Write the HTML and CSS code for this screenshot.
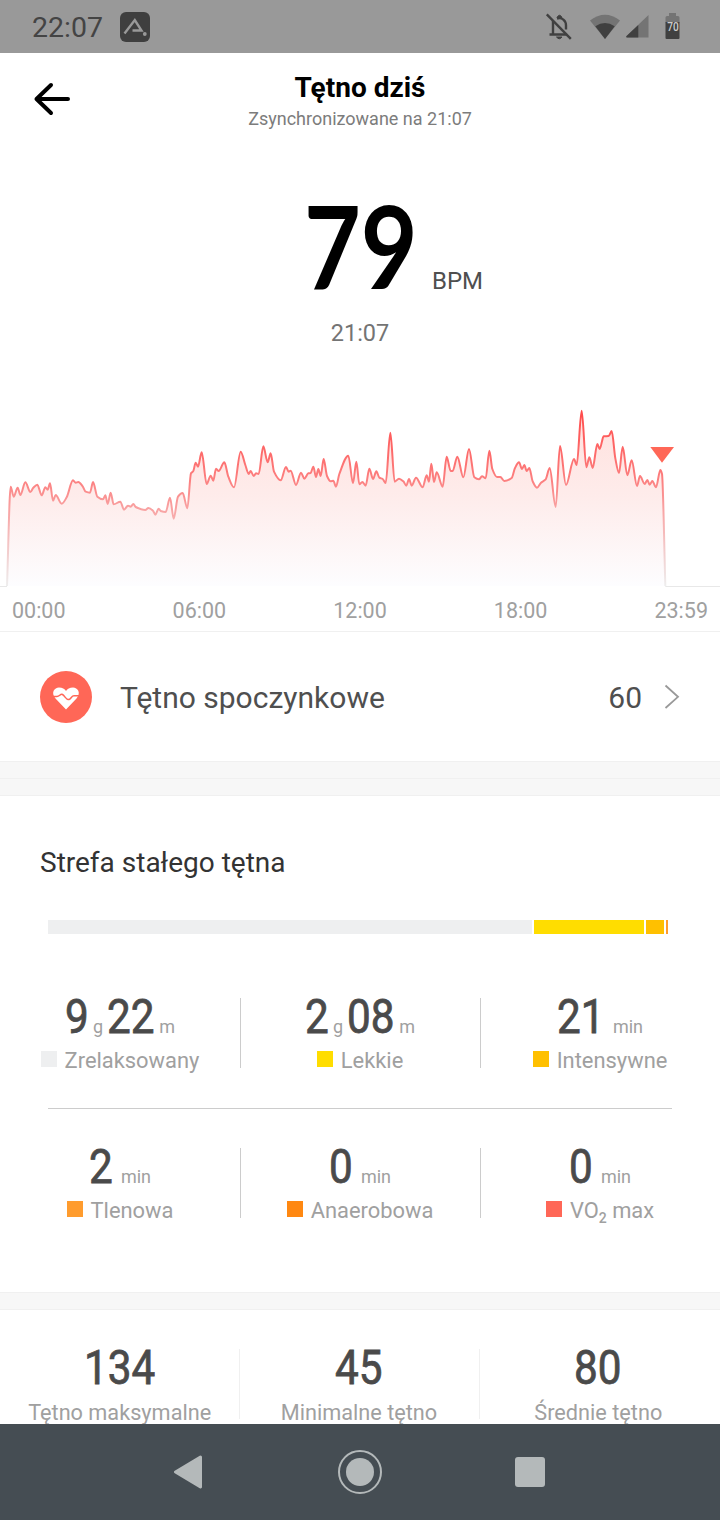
FILE: index.html
```html
<!DOCTYPE html>
<html lang="pl">
<head>
  <meta charset="UTF-8" />
  <meta name="viewport" content="width=device-width, initial-scale=1" />
  <title>Tętno dziś</title>
  <link rel="stylesheet" href="styles.css">
</head>
<body>
  <div class="status-bar">
    <span class="clock">22:07</span>
    <svg class="app-badge" width="30" height="30" viewBox="0 0 30 30">
      <rect width="30" height="30" rx="6" fill="#3f3f3f"/>
      <path d="M4.500 21.500L14.800 8L21.500 18.500H12.500" fill="none" stroke="#999" stroke-width="2.400"/>
      <circle cx="24.800" cy="22" r="1.900" fill="#999"/>
    </svg>
    <div class="status-icons">
      <svg width="28" height="30" viewBox="0 0 28 30" fill="none" stroke="#404040" stroke-width="2.4">
        <path d="M8 9V21.5M4.5 22.5H22M12 6.5C17 5 21 8.500 21 13.500V17.500"/>
        <path d="M12 5.500Q14.500 1 17 5.500Z" fill="#404040" stroke-width="1"/>
        <path d="M11.500 25H17Q14.500 28.500 11.500 25Z" fill="#404040" stroke-width="1"/>
        <path d="M1.800 2.300L25.800 26.800"/>
      </svg>
      <svg width="30" height="26" viewBox="0 0 30 26">
        <path d="M0 6.500Q15 -5 30 6.500L15 25Z" fill="#747474"/>
        <path d="M5.300 12.300Q15 5.500 24.700 12.300L15 25Z" fill="#404040"/>
      </svg>
      <svg width="23" height="23" viewBox="0 0 23 23">
        <path d="M22.500 0V22.500H1Q-.5 22 .8 20.800Z" fill="#747474"/>
        <path d="M12.300 10V22.500H1Q-.5 22 .8 20.800Z" fill="#404040"/>
      </svg>
      <svg class="battery" width="15" height="27" viewBox="0 0 15 27">
        <path d="M4 0H11V3H13Q14.500 3 14.500 4.500V10H.5V4.500Q.5 3 2 3H4Z" fill="#747474"/>
        <path d="M.5 9H14.500V25Q14.500 26 13.500 26H1.500Q.5 26 .5 25Z" fill="#404040"/>
        <text x="8" y="18" class="battery-text" textLength="11.500" lengthAdjust="spacingAndGlyphs">70</text>
      </svg>
    </div>
  </div>

  <header class="header">
    <svg class="back" width="38" height="36" viewBox="0 0 38 36" aria-label="Wstecz">
      <path d="M18 4L3.500 18L18 32M3.500 18H35" fill="none" stroke="#000" stroke-width="4" stroke-linecap="round" stroke-linejoin="round"/>
    </svg>
    <h1>Tętno dziś</h1>
    <p>Zsynchronizowane na 21:07</p>
  </header>

  <section class="current">
    <div class="bpm">
      <span class="bpm-value">79</span>
      <span class="bpm-unit">BPM</span>
    </div>
    <time>21:07</time>
  </section>

  <section class="chart">
    <svg class="plot" viewBox="0 0 2160 564">
      <defs>
        <linearGradient id="lineColor" gradientUnits="userSpaceOnUse" x1="0" y1="30" x2="0" y2="558">
          <stop offset="0" stop-color="#ff4949"/>
          <stop offset="0.4" stop-color="#fc8080"/>
          <stop offset="0.58" stop-color="#f8a6a6"/>
          <stop offset="1" stop-color="#eeeeee"/>
        </linearGradient>
        <linearGradient id="areaColor" gradientUnits="userSpaceOnUse" x1="0" y1="30" x2="0" y2="558">
          <stop offset="0" stop-color="#ffe0dd"/>
          <stop offset="0.5" stop-color="#feeceb"/>
          <stop offset="1" stop-color="#fdfdff"/>
        </linearGradient>
      </defs>
      <path id="area" fill="url(#areaColor)"/>
      <path d="M0 559.500H21M1996 559.500H2160" stroke="#e8e8e8" stroke-width="3"/>
      <path id="line" fill="none" stroke="url(#lineColor)" stroke-width="6" stroke-linejoin="round"/>
      <path d="M1951 141H2022L1986 188Z" fill="#ff6757"/>
    </svg>
    <div class="hours">
      <span>00:00</span><span>06:00</span><span>12:00</span><span>18:00</span><span>23:59</span>
    </div>
  </section>

  <section class="resting">
    <svg width="52" height="52" viewBox="0 0 52 52">
      <circle cx="26" cy="26" r="26" fill="#ff6757"/>
      <path d="M26 38.500L15.500 27.500C10.500 21.500 14.500 16.500 19 16.500C22.500 16.500 24.500 18 26 20C27.500 18 29.500 16.500 33 16.500C37.500 16.500 41.500 21.500 36.500 27.500Z" fill="#fff"/>
      <path d="M12 25.500H17C19.500 25.500 20.500 22.500 22.500 23.500C25 25 26.500 29.500 29 28.500C31.500 27.500 31.500 24.800 34 24.800H40" fill="none" stroke="#ff6757" stroke-width="1.500"/>
    </svg>
    <span class="resting-label">Tętno spoczynkowe</span>
    <span class="resting-value">60</span>
    <svg width="16" height="26" viewBox="0 0 16 26">
      <path d="M1.500 1.500L14 12.800L1.500 24" fill="none" stroke="#999" stroke-width="1.800"/>
    </svg>
  </section>

  <div class="gap double"></div>

  <section class="zones">
    <h2>Strefa stałego tętna</h2>
    <div class="zone-bar">
      <i class="relaxed"></i><i class="light"></i><i class="intensive"></i><i class="aerobic"></i>
    </div>
    <div class="grid">
      <div class="cell">
        <div class="value"><b class="d1">9</b><small class="h">g</small><b class="d2">22</b><small>m</small></div>
        <div class="label"><i class="relaxed"></i>Zrelaksowany</div>
      </div>
      <div class="cell">
        <div class="value"><b class="d1">2</b><small class="h">g</small><b class="d2">08</b><small>m</small></div>
        <div class="label"><i class="light"></i>Lekkie</div>
      </div>
      <div class="cell">
        <div class="value"><b class="d2">21</b><small class="min">min</small></div>
        <div class="label"><i class="intensive"></i>Intensywne</div>
      </div>
    </div>
    <hr>
    <div class="grid">
      <div class="cell">
        <div class="value"><b class="d1">2</b><small class="min">min</small></div>
        <div class="label"><i class="aerobic"></i>Tlenowa</div>
      </div>
      <div class="cell">
        <div class="value"><b class="d1">0</b><small class="min">min</small></div>
        <div class="label"><i class="anaerobic"></i>Anaerobowa</div>
      </div>
      <div class="cell">
        <div class="value"><b class="d1">0</b><small class="min">min</small></div>
        <div class="label"><i class="vo2"></i><span>VO<sub>2</sub> max</span></div>
      </div>
    </div>
  </section>

  <div class="gap"></div>

  <section class="grid summary">
    <div class="cell">
      <div class="value"><b class="d3">134</b></div>
      <div class="label">Tętno maksymalne</div>
    </div>
    <div class="cell">
      <div class="value"><b class="d2">45</b></div>
      <div class="label">Minimalne tętno</div>
    </div>
    <div class="cell">
      <div class="value"><b class="d2">80</b></div>
      <div class="label">Średnie tętno</div>
    </div>
  </section>

  <nav class="nav-bar">
    <svg width="30" height="34" viewBox="0 0 30 34"><path d="M27.500 2L2.500 17L27.500 32Z" fill="#b4b9ba" stroke="#b4b9ba" stroke-width="3" stroke-linejoin="round"/></svg>
    <svg width="44" height="44" viewBox="0 0 44 44"><circle cx="22" cy="22" r="21" fill="none" stroke="#b4b9ba" stroke-width="2"/><circle cx="22" cy="22" r="14" fill="#b4b9ba"/></svg>
    <svg width="30" height="30" viewBox="0 0 30 30"><rect width="30" height="30" rx="3" fill="#b4b9ba"/></svg>
  </nav>

  <script>
    // x,y samples in chart units
    const samples = [
      [21,558],[32,260],[41,290],[53,263],[61,285],[76,247],[91,276],[100,263],[112,254],[125,286],
      [136,262],[143,269],[150,250],[159,302],[167,285],[185,311],[200,292],[219,241],[227,248],[235,246],
      [248,259],[257,275],[270,278],[279,246],[292,290],[309,298],[316,286],[323,312],[332,278],[341,313],
      [361,305],[372,329],[384,317],[392,320],[400,312],[407,321],[436,330],[445,324],[459,332],[466,344],
      [476,326],[482,333],[497,336],[510,293],[521,356],[534,290],[548,279],[562,325],[573,220],[580,213],
      [587,188],[594,200],[605,157],[620,252],[632,227],[640,242],[648,206],[656,213],[673,187],[685,230],
      [702,262],[722,155],[736,195],[746,222],[752,213],[761,228],[768,220],[776,222],[790,139],[803,187],
      [812,160],[822,215],[842,241],[858,201],[866,215],[872,212],[888,255],[903,218],[913,236],[925,220],
      [932,219],[940,200],[948,231],[955,207],[962,228],[971,177],[981,228],[992,244],[1000,242],[1008,260],
      [1018,222],[1045,167],[1059,250],[1069,185],[1078,253],[1087,246],[1097,257],[1108,206],[1119,237],[1129,214],
      [1138,233],[1148,237],[1157,249],[1171,98],[1184,245],[1197,236],[1210,244],[1219,257],[1227,237],[1235,257],
      [1248,233],[1268,262],[1280,226],[1287,245],[1294,191],[1302,246],[1310,217],[1328,260],[1340,170],[1352,213],
      [1358,213],[1372,170],[1390,232],[1407,147],[1423,232],[1437,238],[1446,229],[1457,235],[1468,152],[1477,207],
      [1491,231],[1501,231],[1513,243],[1535,234],[1545,204],[1557,187],[1566,207],[1573,195],[1580,213],[1588,204],
      [1598,244],[1611,263],[1623,248],[1637,238],[1649,204],[1667,321],[1680,138],[1698,255],[1722,177],[1730,195],
      [1745,32],[1759,202],[1768,172],[1778,204],[1792,132],[1799,147],[1811,109],[1826,108],[1835,93],[1846,175],
      [1857,219],[1868,140],[1882,226],[1895,181],[1911,258],[1920,228],[1934,252],[1942,240],[1949,254],[1957,243],
      [1968,262],[1981,210],[1986,222],[1996,558]
    ];

    // slope between sample i and i + 1
    function slope(i) {
      return (samples[i + 1][1] - samples[i][1]) / (samples[i + 1][0] - samples[i][0]);
    }

    // flat at peaks and dips, harmonic mean elsewhere
    function tangent(i) {
      if (i === 0) return slope(0);
      if (i === samples.length - 1) return slope(i - 1);
      const a = slope(i - 1), b = slope(i);
      return a * b <= 0 ? 0 : 2 * a * b / (a + b);
    }

    let d = 'M' + samples[0];
    for (let i = 0; i < samples.length - 1; i++) {
      const [x0, y0] = samples[i];
      const [x1, y1] = samples[i + 1];
      const h = (x1 - x0) / 3;
      d += `C${x0 + h},${y0 + tangent(i) * h} ${x1 - h},${y1 - tangent(i + 1) * h} ${x1},${y1}`;
    }
    document.getElementById('line').setAttribute('d', d);
    document.getElementById('area').setAttribute('d', d + 'Z');
  </script>
</body>
</html>
```
FILE: styles.css
```css
* {
  box-sizing: border-box;
}
body {
  margin: 0;
  height: 1520px;
  overflow: hidden;
  display: flex;
  flex-direction: column;
  font-family: Roboto, sans-serif;
  background: #fff;
  color: #4f4f4f;
}
body > * {
  flex-shrink: 0;
}
svg {
  display: block;
}
.status-bar {
  height: 53px;
  background: #999;
  display: flex;
  align-items: center;
  padding: 0 40px 0 32px;
}
.clock {
  font-size: 28.5px;
  color: #444;
  margin-right: 17px;
  line-height: 50px;
  padding-top: 3px;
}
.status-icons {
  margin-left: auto;
  display: flex;
  align-items: center;
}
.status-icons svg:nth-child(2) {
  margin-left: 17px;
}
.status-icons svg:nth-child(3) {
  margin-left: 6px;
}
.status-icons svg:nth-child(4) {
  margin-left: 16px;
}
.battery {
  overflow: visible;
}
.battery-text {
  font-size: 13px;
  font-weight: 500;
  fill: #ccc;
  text-anchor: middle;
}
.header {
  height: 102px;
  display: grid;
  grid-template-columns: 72px 1fr 72px;
  grid-template-rows: 32px 28px;
  padding-top: 19px;
  text-align: center;
}
.back {
  grid-row: 1 / 3;
  margin: 9px 0 0 33px;
}
.header h1 {
  margin: 0;
  font-size: 28px;
  font-weight: 700;
  line-height: 32px;
  color: #000;
}
.header p {
  grid-column: 2;
  margin: 0;
  font-size: 18px;
  line-height: 30px;
  color: #7c7c7c;
}
.current {
  height: 245px;
  padding-top: 35px;
  text-align: center;
}
.bpm {
  display: flex;
  align-items: baseline;
  padding-left: 304px;
  height: 110px;
  line-height: 110px;
}
.bpm-value {
  width: 128px;
  font-family: Lato, Roboto, sans-serif;
  font-size: 114px;
  font-weight: 700;
  color: #000;
  text-align: left;
  transform: scaleX(0.86);
  transform-origin: left;
}
.bpm-unit {
  font-size: 24px;
}
.current time {
  display: block;
  margin-top: 18px;
  font-size: 23.5px;
  line-height: 30px;
  color: #747474;
}
.chart {
  border-bottom: 1px solid #f0f0f0;
  height: 232px;
}
.plot {
  width: 720px;
  height: 188px;
}
.hours {
  display: flex;
  justify-content: space-between;
  padding: 1px 12px 0;
  font-size: 21.5px;
  line-height: 44px;
  color: #a0a0a0;
}
.resting {
  height: 129px;
  display: flex;
  align-items: center;
  padding: 0 40px;
}
.resting-label {
  margin-left: 28px;
  padding-top: 2px;
  font-size: 30px;
}
.resting-value {
  margin: 0 22px 0 auto;
  padding-top: 2px;
  font-size: 30px;
}
.gap {
  height: 18px;
  background: #f7f7f7;
  border-top: 1px solid #f0f0f0;
  border-bottom: 1px solid #f0f0f0;
}
.double {
  height: 35px;
  background: linear-gradient(#f7f7f7 16px, #f0f0f0 16px, #f0f0f0 17px, #f7f7f7 17px);
}
.zones {
  height: 496px;
}
.zones h2 {
  margin: 0;
  padding: 49px 40px 0;
  font-size: 28px;
  font-weight: 400;
  line-height: 35px;
  color: #333;
}
.zone-bar {
  display: flex;
  gap: 2px;
  height: 14px;
  margin: 40px 52px 64px 48px;
}
.zone-bar .relaxed {
  width: 484px;
}
.zone-bar .light {
  width: 110px;
}
.zone-bar .intensive {
  width: 18px;
}
.zone-bar .aerobic {
  width: 2px;
}
.grid {
  display: grid;
  grid-template-columns: repeat(3, 1fr);
}
.cell {
  height: 70px;
}
.cell + .cell {
  border-left: 1px solid #ccc;
}
.zones hr {
  border: 0;
  height: 1px;
  margin: 40px 48px 39px;
  background: #ccc;
}
.value {
  display: flex;
  justify-content: center;
  align-items: baseline;
  height: 44px;
  line-height: 38px;
}
/* condensed digits: the box is as wide as the squeezed text */
.value b {
  font-size: 48px;
  font-weight: 400;
  color: #4a4a4a;
  -webkit-text-stroke: 0.8px #4a4a4a;
  white-space: nowrap;
  transform: scaleX(0.88);
  transform-origin: left;
}
.d1 {
  width: 24px;
}
.d2 {
  width: 48px;
}
.d3 {
  width: 72px;
}
.value small {
  margin-left: 4px;
  font-size: 18px;
  color: #a0a0a0;
}
.value .h {
  margin-right: 4px;
}
.value .min {
  margin-left: 8px;
}
.label {
  display: flex;
  justify-content: center;
  font-size: 21.9px;
  line-height: 38px;
  color: #a0a0a0;
  white-space: nowrap;
}
.cell + .cell .label,
.cell + .cell .value {
  margin-left: -1px;
}
.label i {
  width: 16px;
  height: 16px;
  margin: 9px 8px 0 0;
}
.label sub {
  font-size: 14px;
  font-weight: 500;
  line-height: 0;
}
.relaxed {
  background: #eeeff0;
}
.light {
  background: #ffdd00;
}
.intensive {
  background: #ffc000;
}
.aerobic {
  background: #ff9c2e;
}
.anaerobic {
  background: #ff8811;
}
.vo2 {
  background: #ff6757;
}
.summary {
  height: 114px;
  padding: 39px 2px 0 0;
  overflow: hidden;
}
.summary .cell + .cell {
  border-color: #f0f0f0;
}
.summary .label {
  font-size: 21.7px;
  line-height: 40px;
}
.nav-bar {
  height: 96px;
  background: #454d53;
  display: flex;
  align-items: center;
  padding-left: 173px;
}
.nav-bar svg:nth-child(2) {
  margin: 0 133px 0 135px;
}
```
